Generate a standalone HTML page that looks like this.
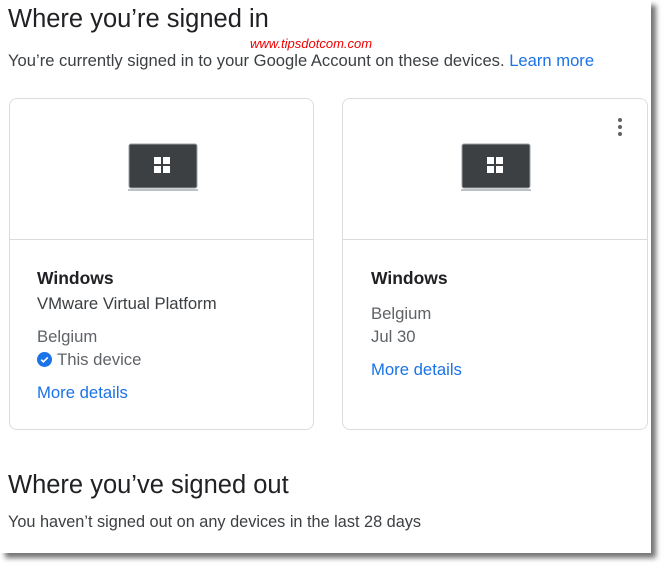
<!DOCTYPE html>
<html><head><style>
body{margin:0;width:665px;height:566px;background:#fff;position:relative;overflow:hidden;font-family:"Liberation Sans",Arial,sans-serif;}
.page{position:absolute;left:0;top:0;width:651px;height:553px;background:#fff;box-shadow:5px 5px 5px rgba(0,0,0,.55);}
.t{position:absolute;white-space:nowrap;}
.card{position:absolute;top:98px;height:332px;border:1px solid #dadce0;border-radius:8px;box-sizing:border-box;}
.card .div{position:absolute;left:0;right:0;top:140px;border-top:1px solid #dadce0;}
.lap{position:absolute;top:44px;width:70px;height:48px;}
.blue{color:#1a73e8}
</style></head><body>
<div class="page">
<div class="t" style="left:8px;top:5px;font-size:25.5px;color:#202124">Where you’re signed in</div>
<div class="t" style="left:250px;top:36px;font-size:13px;color:#e00;font-style:italic">www.tipsdotcom.com</div>
<div class="t" style="left:8px;top:51px;font-size:16.6px;color:#3c4043">You’re currently signed in to your Google Account on these devices. <span class="blue">Learn more</span></div>

<div class="card" style="left:9px;width:305px">
<svg class="lap" style="left:118px" viewBox="0 0 70 48"><rect x="1" y="1" width="68" height="44" rx="2" fill="#3c4043" stroke="#9aa0a6" stroke-width="1"/><rect x="0" y="46" width="70" height="2" fill="#bdc1c6"/><rect x="26" y="14" width="7" height="7" fill="#fff"/><rect x="35" y="14" width="7" height="7" fill="#fff"/><rect x="26" y="23" width="7" height="7" fill="#fff"/><rect x="35" y="23" width="7" height="7" fill="#fff"/></svg>
<div class="div"></div>
<div class="t" style="left:27px;top:169px;font-size:17.5px;font-weight:bold;color:#202124">Windows</div>
<div class="t" style="left:27px;top:195px;font-size:16.7px;color:#3c4043">VMware Virtual Platform</div>
<div class="t" style="left:27px;top:228px;font-size:16.7px;color:#5f6368">Belgium</div>
<div class="t" style="left:27px;top:251px;font-size:16.7px;color:#5f6368"><svg width="15" height="15" viewBox="0 0 16 16" style="vertical-align:-2px;margin-right:5px"><circle cx="8" cy="8" r="8" fill="#1a73e8"/><path d="M4.5 8.2l2.3 2.3 4.7-4.7" stroke="#fff" stroke-width="1.8" fill="none"/></svg>This device</div>
<div class="t blue" style="left:27px;top:284px;font-size:16.7px">More details</div>
</div>

<div class="card" style="left:342px;width:306px">
<svg class="lap" style="left:118px" viewBox="0 0 70 48"><rect x="1" y="1" width="68" height="44" rx="2" fill="#3c4043" stroke="#9aa0a6" stroke-width="1"/><rect x="0" y="46" width="70" height="2" fill="#bdc1c6"/><rect x="26" y="14" width="7" height="7" fill="#fff"/><rect x="35" y="14" width="7" height="7" fill="#fff"/><rect x="26" y="23" width="7" height="7" fill="#fff"/><rect x="35" y="23" width="7" height="7" fill="#fff"/></svg>
<svg style="position:absolute;left:273px;top:18px" width="8" height="20"><circle cx="4" cy="3" r="2" fill="#5f6368"/><circle cx="4" cy="10" r="2" fill="#5f6368"/><circle cx="4" cy="17" r="2" fill="#5f6368"/></svg>
<div class="div"></div>
<div class="t" style="left:28px;top:169px;font-size:17.5px;font-weight:bold;color:#202124">Windows</div>
<div class="t" style="left:28px;top:205px;font-size:16.7px;color:#5f6368">Belgium</div>
<div class="t" style="left:28px;top:228px;font-size:16.7px;color:#5f6368">Jul 30</div>
<div class="t blue" style="left:28px;top:261px;font-size:16.7px">More details</div>
</div>

<div class="t" style="left:8px;top:471px;font-size:25.5px;color:#202124">Where you’ve signed out</div>
<div class="t" style="left:8px;top:513px;font-size:16.3px;color:#3c4043">You haven’t signed out on any devices in the last 28 days</div>
</div>
</body></html>
